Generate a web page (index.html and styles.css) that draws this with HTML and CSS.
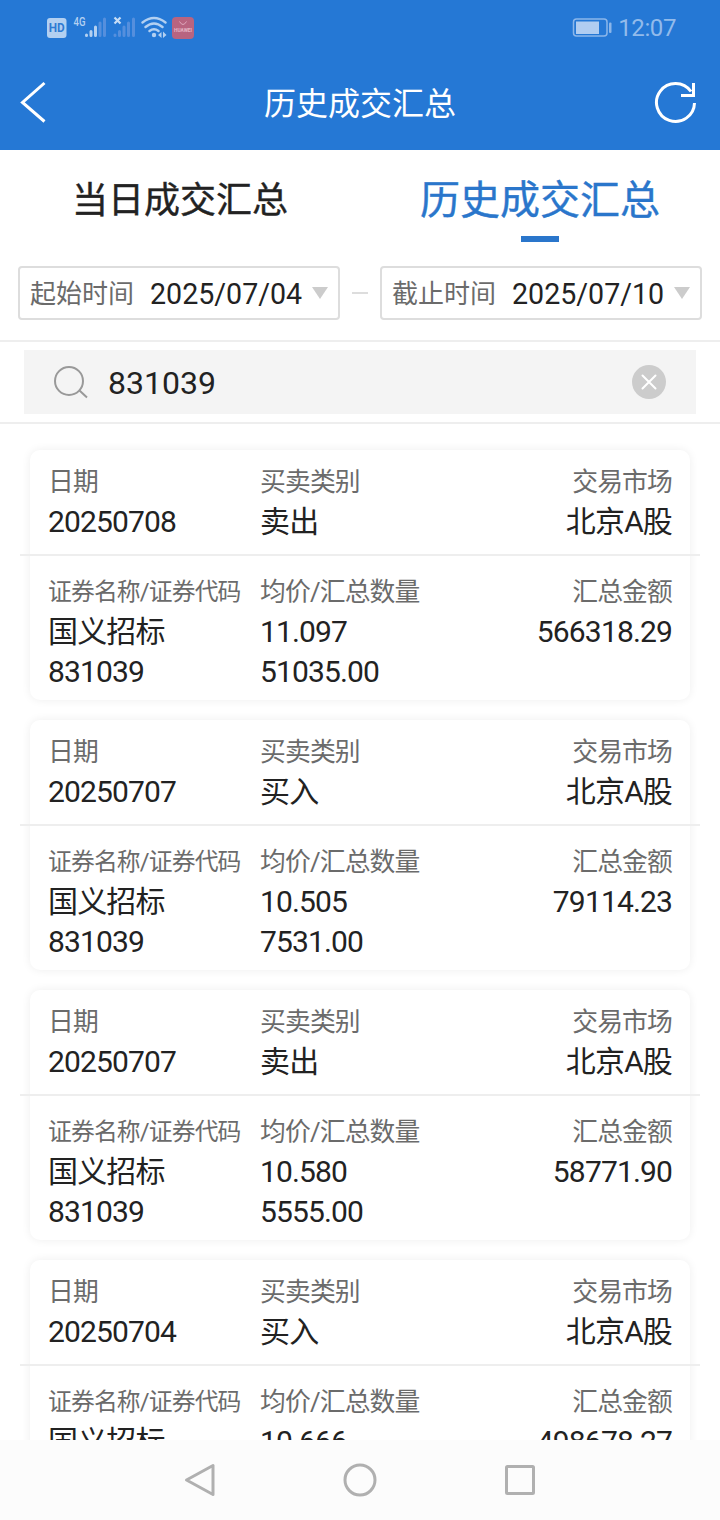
FILE: index.html
```html
<!DOCTYPE html>
<html lang="zh-CN">
<head>
    <meta charset="UTF-8">
    <meta name="viewport" content="width=device-width, initial-scale=1.0">
    <title>历史成交汇总</title>
    <link rel="stylesheet" href="styles.css">
</head>
<body>
    <div class="app">
        <header class="header">
            <div class="status-bar">
                <svg class="status-icons" width="150" height="28" viewBox="0 0 150 28">
                    <rect x="1" y="4" width="19.500" height="20" rx="3" fill="#b3d0f1"/>
                    <text x="10.750" y="18.200" class="hd-text" text-anchor="middle" textLength="16" lengthAdjust="spacingAndGlyphs">HD</text>
                    <text x="27.500" y="12" class="net-text" textLength="12" lengthAdjust="spacingAndGlyphs">4G</text>
                    <g stroke="#b3d0f1" stroke-width="3" stroke-linecap="round">
                        <path d="M40.500 21v.5M45 17.500v4M49.500 13v8.500"/>
                        <path d="M54 9v12.500M58.500 5v16.500" stroke="#558fdd"/>
                        <path d="M69 21v.5M73.500 17.500v4M78 13v8.500M82.500 9v12.500M87.500 5v16.500" stroke="#558fdd"/>
                    </g>
                    <path d="M68.500 3.500l6 6M74.500 3.500l-6 6" stroke="#c6ddf6" stroke-width="2.200"/>
                    <g fill="none" stroke="#b3d0f1" stroke-width="2.400" stroke-linecap="round">
                        <path d="M96.500 8.500q11.500-9 23 0M99.500 13q8.500-7 17 0M103.500 17q4.500-3.500 9 0"/>
                    </g>
                    <circle cx="108" cy="21" r="2.200" fill="#b3d0f1"/>
                    <path d="M112 21l3.500-3v6zM117 17.500l3.500 3.500-3.500 3z" fill="#b3d0f1"/>
                    <rect x="126" y="3" width="22" height="22" rx="4" fill="#b86480"/>
                    <path d="M133.500 7.500q3.500 6 7 0" fill="none" stroke="#dfa9bd"/>
                    <text x="128" y="17.500" class="brand-text" textLength="18" lengthAdjust="spacingAndGlyphs">HUAWEI</text>
                </svg>
                <div class="status-right">
                    <svg width="40" height="20" viewBox="0 0 40 20">
                        <rect x="1.500" y="1" width="33.500" height="17" rx="3" fill="none" stroke="#8bb6ea" stroke-width="1.500"/>
                        <rect x="4" y="3.500" width="23" height="12.500" fill="#b0cdf1"/>
                        <rect x="37" y="4.500" width="2.500" height="10.500" rx="1" fill="#8bb6ea"/>
                    </svg>
                    <span class="clock">12:07</span>
                </div>
            </div>
            <div class="title-bar">
                <svg class="back" width="44" height="44" viewBox="0 0 44 44">
                    <path d="M33.500 2L11.500 21.500l22 19" fill="none" stroke="#fff" stroke-width="3"/>
                </svg>
                <h1 class="title">历史成交汇总</h1>
                <svg class="refresh" width="44" height="44" viewBox="0 0 44 44">
                    <path d="M40.500 22a19 19 0 1 1-3.500-11.500" fill="none" stroke="#fff" stroke-width="3"/>
                    <path d="M39.500 2v12.500H27" fill="none" stroke="#fff" stroke-width="3"/>
                </svg>
            </div>
        </header>

        <nav class="tabs">
            <div class="tab">当日成交汇总</div>
            <div class="tab active">历史成交汇总</div>
        </nav>

        <div class="date-row">
            <div class="date-box">
                <span class="date-label">起始时间</span>
                <span class="date-value">2025/07/04</span>
                <i class="arrow"></i>
            </div>
            <span class="dash"></span>
            <div class="date-box">
                <span class="date-label">截止时间</span>
                <span class="date-value">2025/07/10</span>
                <i class="arrow"></i>
            </div>
        </div>

        <div class="search-row">
            <div class="search-box">
                <svg width="36" height="36" viewBox="0 0 36 36" fill="none" stroke="#999" stroke-width="2">
                    <circle cx="16" cy="17" r="14"/>
                    <path d="M26.500 26.500l7.500 7"/>
                </svg>
                <span class="keyword">831039</span>
                <svg width="34" height="34" viewBox="0 0 34 34">
                    <circle cx="17" cy="17" r="17" fill="#ccc"/>
                    <path d="M10.500 10.500l13 13M23.500 10.500l-13 13" stroke="#fff" stroke-width="2" stroke-linecap="round"/>
                </svg>
            </div>
        </div>

        <main class="list">
            <div class="card">
                <div class="card-top">
                    <div class="col"><p class="label">日期</p><p>20250708</p></div>
                    <div class="col"><p class="label">买卖类别</p><p>卖出</p></div>
                    <div class="col right"><p class="label">交易市场</p><p>北京A股</p></div>
                </div>
                <div class="card-bottom">
                    <div class="col"><p class="label small">证券名称/证券代码</p><p>国义招标</p><p>831039</p></div>
                    <div class="col"><p class="label">均价/汇总数量</p><p>11.097</p><p>51035.00</p></div>
                    <div class="col right"><p class="label">汇总金额</p><p>566318.29</p></div>
                </div>
            </div>

            <div class="card">
                <div class="card-top">
                    <div class="col"><p class="label">日期</p><p>20250707</p></div>
                    <div class="col"><p class="label">买卖类别</p><p>买入</p></div>
                    <div class="col right"><p class="label">交易市场</p><p>北京A股</p></div>
                </div>
                <div class="card-bottom">
                    <div class="col"><p class="label small">证券名称/证券代码</p><p>国义招标</p><p>831039</p></div>
                    <div class="col"><p class="label">均价/汇总数量</p><p>10.505</p><p>7531.00</p></div>
                    <div class="col right"><p class="label">汇总金额</p><p>79114.23</p></div>
                </div>
            </div>

            <div class="card">
                <div class="card-top">
                    <div class="col"><p class="label">日期</p><p>20250707</p></div>
                    <div class="col"><p class="label">买卖类别</p><p>卖出</p></div>
                    <div class="col right"><p class="label">交易市场</p><p>北京A股</p></div>
                </div>
                <div class="card-bottom">
                    <div class="col"><p class="label small">证券名称/证券代码</p><p>国义招标</p><p>831039</p></div>
                    <div class="col"><p class="label">均价/汇总数量</p><p>10.580</p><p>5555.00</p></div>
                    <div class="col right"><p class="label">汇总金额</p><p>58771.90</p></div>
                </div>
            </div>

            <div class="card">
                <div class="card-top">
                    <div class="col"><p class="label">日期</p><p>20250704</p></div>
                    <div class="col"><p class="label">买卖类别</p><p>买入</p></div>
                    <div class="col right"><p class="label">交易市场</p><p>北京A股</p></div>
                </div>
                <div class="card-bottom">
                    <div class="col"><p class="label small">证券名称/证券代码</p><p>国义招标</p></div>
                    <div class="col"><p class="label">均价/汇总数量</p><p>10.666</p></div>
                    <div class="col right"><p class="label">汇总金额</p><p>498678.27</p></div>
                </div>
            </div>
        </main>

        <footer class="nav-bar">
            <svg width="36" height="36" viewBox="0 0 36 36">
                <path d="M31 3.500v29L4.500 18z"/>
            </svg>
            <svg width="36" height="36" viewBox="0 0 36 36">
                <circle cx="18" cy="18" r="15"/>
            </svg>
            <svg width="36" height="36" viewBox="0 0 36 36">
                <rect x="4.500" y="4.500" width="27" height="27" rx="1"/>
            </svg>
        </footer>
    </div>
</body>
</html>
```

FILE: styles.css
```css
* {
    box-sizing: border-box;
}

body {
    margin: 0;
    font-family: Roboto, "Noto Sans CJK SC", sans-serif;
    background: #fff;
    color: #222;
}

.app {
    display: flex;
    flex-direction: column;
    width: 720px;
    height: 1520px;
    overflow: hidden;
}

.header {
    height: 150px;
    background: #2578d5;
    color: #fff;
}

.status-bar {
    display: flex;
    justify-content: space-between;
    align-items: center;
    height: 56px;
    padding: 0 44px 0 46px;
}

.hd-text {
    font-size: 12px;
    font-weight: bold;
    fill: #2f7bd3;
}

.net-text {
    font-size: 13px;
    font-weight: 500;
    fill: #b3d0f1;
}

.brand-text {
    font-size: 5px;
    font-weight: bold;
    fill: #e5b5c6;
}

.status-right {
    display: flex;
    align-items: center;
    gap: 6px;
}

.clock {
    font-size: 24px;
    line-height: 28px;
    letter-spacing: -0.4px;
    color: #92bbeb;
}

.title-bar {
    display: flex;
    justify-content: space-between;
    align-items: center;
    height: 94px;
    padding: 0 22px 0 11px;
}

.title {
    margin: 0;
    padding: 2px 0 0 11px;
    font-size: 32px;
    font-weight: 400;
    line-height: 48px;
}

.tabs {
    display: flex;
    height: 92px;
}

.tab {
    flex: 1;
    display: flex;
    flex-direction: column;
    align-items: center;
    font-size: 36px;
    line-height: 102px;
    -webkit-text-stroke: 0.4px;
}

.tab.active {
    font-size: 40px;
    color: #2a76cb;
}

.tab.active::after {
    content: "";
    width: 38px;
    height: 6px;
    margin-top: -16px;
    background: #2a76cb;
}

.date-row {
    display: flex;
    justify-content: space-between;
    align-items: center;
    height: 100px;
    padding: 4px 18px 0;
    border-bottom: 2px solid #eee;
}

.date-box {
    display: flex;
    align-items: center;
    width: 322px;
    height: 54px;
    padding-left: 10px;
    border: 2px solid #ddd;
    border-radius: 4px;
}

.date-label {
    width: 120px;
    padding-top: 3px;
    font-size: 26px;
    line-height: 47px;
    color: #6b6b6b;
}

.date-value {
    width: 162px;
    padding-top: 3px;
    font-size: 28.6px;
    line-height: 47px;
}

.arrow {
    border: 8px solid transparent;
    border-top: 12px solid #ccc;
    border-bottom: 0;
}

.dash {
    width: 16px;
    height: 2px;
    background: #ddd;
}

.search-row {
    height: 82px;
    padding: 8px 24px;
    border-bottom: 2px solid #eee;
}

.search-box {
    display: flex;
    align-items: center;
    height: 64px;
    padding: 0 30px 0 29px;
    background: #f4f4f4;
}

.keyword {
    flex: 1;
    padding: 2px 0 0 19px;
    font-size: 32px;
}

.list {
    flex: 1;
    min-height: 0;
    padding: 26px 30px 0;
    overflow: hidden;
}

.card {
    height: 250px;
    margin-bottom: 20px;
    border-radius: 10px;
    box-shadow: 0 0 10px rgba(0, 0, 0, 0.07);
    font-size: 30px;
    letter-spacing: -0.85px;
}

.card-top,
.card-bottom {
    display: grid;
    grid-template-columns: 212px 230px 1fr;
}

.card-top {
    height: 106px;
    margin: 0 -10px;
    padding: 12px 28px 0;
    border-bottom: 2px solid #eee;
}

.card-bottom {
    padding: 16px 18px 0;
}

.col p {
    margin: 0;
    height: 40px;
    line-height: 40px;
    white-space: nowrap;
}

.col .label {
    font-size: 25.8px;
    color: #6b6b6b;
}

.col .small {
    font-size: 23.8px;
}

.right {
    text-align: right;
}

.nav-bar {
    display: flex;
    justify-content: center;
    align-items: center;
    gap: 124px;
    height: 80px;
    background: #fcfcfc;
}

.nav-bar svg {
    fill: none;
    stroke: #b0b0b0;
    stroke-width: 3;
    stroke-linejoin: round;
}
```
